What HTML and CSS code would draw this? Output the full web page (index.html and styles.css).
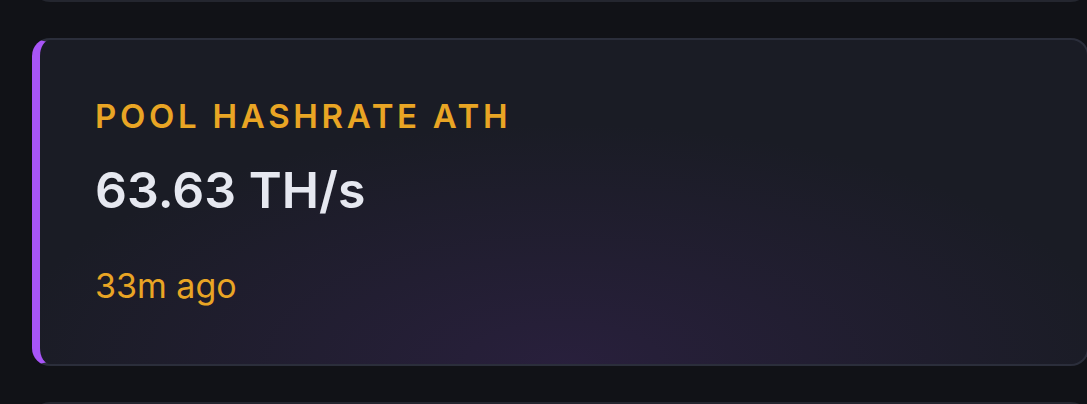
FILE: index.html
```html
<!DOCTYPE html>
<html lang="en">
<head>
<meta charset="utf-8">
<title>Pool Hashrate ATH</title>
<link rel="stylesheet" href="styles.css">
</head>
<body>
  <div class="stack">
    <div class="card card-prev"></div>
    <section class="card stat-card">
      <div class="stat-label">POOL HASHRATE ATH</div>
      <div class="stat-value">63.63 TH/s</div>
      <div class="stat-meta">33m ago</div>
    </section>
    <div class="card card-next"></div>
  </div>
</body>
</html>
```

FILE: styles.css
```css
html, body {
  margin: 0;
  padding: 0;
  background: #111217;
  height: 100%;
  overflow: hidden;
}

.stack {
  display: flex;
  flex-direction: column;
  gap: 36px;
  padding-left: 32px;
  margin-right: -2px;
  margin-top: -40px;
}

.card {
  box-sizing: border-box;
  background: #1a1c25;
  border: 2px solid #2b2e3b;
  border-radius: 18px;
}

.card-prev {
  height: 42px;
  border-color: #24262f;
}

.card-next {
  height: 60px;
  border-color: #24262f;
}

.stat-card {
  height: 328px;
  border-left: 8px solid #a855f7;
  padding: 56px 50px 0 55px;
  background:
    radial-gradient(ellipse 560px 240px at 50% 100%, rgba(58, 36, 88, 0.45), rgba(58, 36, 88, 0) 100%),
    #1a1c25;
  font-family: Inter, "Noto Sans", sans-serif;
  display: flex;
  flex-direction: column;
}

.stat-label {
  color: #e9a524;
  font-size: 33px;
  font-weight: 600;
  letter-spacing: 0.112em;
  line-height: 40px;
}

.stat-value {
  color: #e6e8f0;
  font-size: 50px;
  font-weight: 600;
  line-height: 56px;
  margin-top: 26px;
}

.stat-meta {
  color: #e9a524;
  font-size: 34px;
  font-weight: 400;
  line-height: 40px;
  margin-top: 48px;
}
```
